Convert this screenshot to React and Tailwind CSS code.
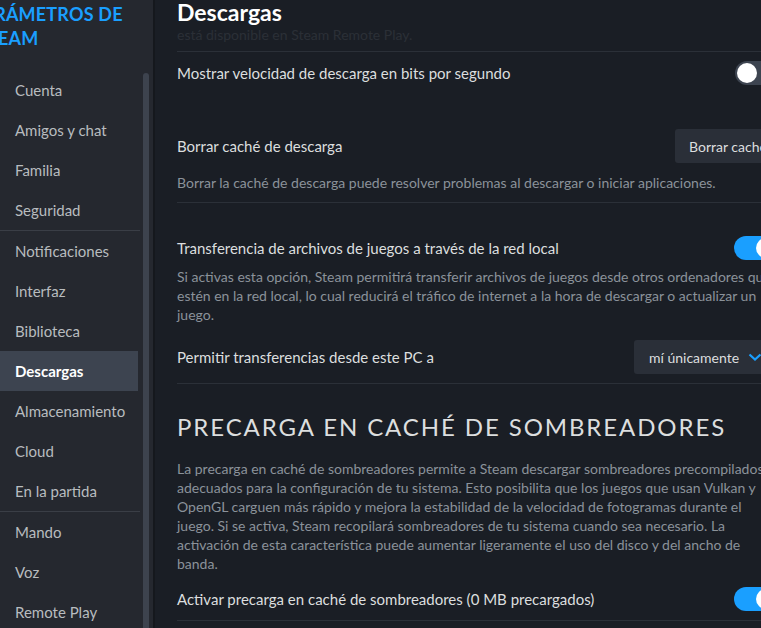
import React from "react";

const font = { fontFamily: "Lato, 'Noto Sans', sans-serif" };

function Toggle({ on }) {
  return (
    <div
      className={
        "relative h-[24px] w-[46px] shrink-0 rounded-full " +
        (on ? "bg-[#1a9fff]" : "bg-[#3d4450]")
      }
    >
      <div
        className={
          "absolute top-[2px] h-[20px] w-[20px] rounded-full bg-white " +
          (on ? "left-[22px]" : "left-[2px]")
        }
      />
    </div>
  );
}

const items = [
  ["Cuenta"],
  ["Amigos y chat"],
  ["Familia"],
  ["Seguridad", true],
  ["Notificaciones"],
  ["Interfaz"],
  ["Biblioteca"],
  ["Descargas"],
  ["Almacenamiento"],
  ["Cloud"],
  ["En la partida", true],
  ["Mando"],
  ["Voz"],
  ["Remote Play"],
];

export default function App() {
  return (
    <div
      className="flex h-[628px] w-[761px] overflow-hidden bg-[#1a1e25]"
      style={font}
    >
      {/* Sidebar */}
      <div className="flex h-full w-[153px] shrink-0 bg-[#25282f]">
        <div className="flex w-[140px] flex-col overflow-hidden">
          <div className="mt-[2px] w-[200px] text-[18px] font-bold leading-[24px] tracking-[0.2px] text-[#1a9fff]">
            <div className="ml-[-29px]">PARÁMETROS DE</div>
            <div className="ml-[-23px]">STEAM</div>
          </div>
          <div className="mt-[20px] flex flex-col">
            {items.map(([name, sep]) => (
              <React.Fragment key={name}>
                <div
                  className={
                    "flex h-[40px] shrink-0 items-center pl-[15px] text-[15px] " +
                    (name === "Descargas"
                      ? "w-[138px] bg-[#3d4450] font-bold text-white"
                      : "text-[#b8bcbf]")
                  }
                >
                  {name}
                </div>
                {sep && <div className="h-[1px] w-[140px] bg-[#3a3e46]" />}
              </React.Fragment>
            ))}
          </div>
        </div>
        <div className="flex w-[13px] flex-col items-start pl-[3px]">
          <div className="mt-[73px] w-[6px] flex-1 rounded-t-[3px] bg-[#3d434e]" />
        </div>
      </div>
      <div className="w-[2px] shrink-0 bg-[#15181d]" />

      {/* Main */}
      <div className="min-w-0 flex-1 overflow-hidden">
        <div className="ml-[22px] w-[603px]">
          {/* header */}
          <div className="relative h-[52px] border-b border-[#2b3038]">
            <div className="absolute left-0 top-[24px] text-[14px] text-[#8b929a] opacity-15">
              está disponible en Steam Remote Play.
            </div>
            <div className="relative text-[23px] font-bold leading-[25px] text-white">
              Descargas
            </div>
          </div>

          {/* row 1 */}
          <div className="flex h-[58px] items-start justify-between pt-[10px]">
            <div className="text-[15px] leading-[22px] text-[#dcdedf]">
              Mostrar velocidad de descarga en bits por segundo
            </div>
            <div className="mt-[-1px] ml-auto mr-[-1px]">
              <Toggle on={false} />
            </div>
          </div>

          {/* Borrar cache */}
          <div className="border-b border-[#2b3038] pb-[9px] pt-[19px]">
            <div className="flex items-center justify-between">
              <div className="text-[15px] leading-[22px] text-[#dcdedf]">
                Borrar caché de descarga
              </div>
              <div className="flex h-[34px] w-[105px] items-center rounded-[3px] bg-[#2a2f38] pl-[14px] text-[14px] text-[#dcdedf]">
                Borrar caché
              </div>
            </div>
            <div className="mt-[10px] text-[14px] leading-[20px] text-[#8b929a]">
              Borrar la caché de descarga puede resolver problemas al descargar
              o iniciar aplicaciones.
            </div>
          </div>

          {/* LAN transfer */}
          <div className="border-b border-[#2b3038] pb-[9px] pt-[33px]">
            <div className="flex items-center justify-between">
              <div className="text-[15px] leading-[22px] text-[#dcdedf]">
                Transferencia de archivos de juegos a través de la red local
              </div>
              <Toggle on />
            </div>
            <div className="mt-[7px] w-[600px] text-[14px] leading-[19px] text-[#8b929a]">
              Si activas esta opción, Steam permitirá transferir archivos de
              juegos desde otros ordenadores que estén en la red local, lo cual
              reducirá el tráfico de internet a la hora de descargar o
              actualizar un juego.
            </div>
            <div className="mt-[16px] flex items-center justify-between">
              <div className="text-[15px] leading-[22px] text-[#dcdedf]">
                Permitir transferencias desde este PC a
              </div>
              <div className="flex h-[34px] w-[146px] items-center justify-between rounded-[3px] bg-[#2a2f38] pl-[15px] pr-[18px] text-[14px] text-[#dcdedf]">
                <span>mí únicamente</span>
                <svg width="14" height="10" viewBox="0 0 14 10">
                  <path
                    d="M1.5 2.5 L7 7.5 L12.5 2.5"
                    fill="none"
                    stroke="#1a9fff"
                    strokeWidth="2.2"
                  />
                </svg>
              </div>
            </div>
          </div>

          {/* Shader section */}
          <div className="pt-[27px] text-[24px] font-normal leading-[32px] tracking-[1.9px] text-[#dcdedf]">
            PRECARGA EN CACHÉ DE SOMBREADORES
          </div>
          <div className="mt-[16px] w-[600px] text-[14px] leading-[19px] text-[#8b929a]">
            La precarga en caché de sombreadores permite a Steam descargar
            sombreadores precompilados adecuados para la configuración de tu
            sistema. Esto posibilita que los juegos que usan Vulkan y OpenGL
            carguen más rápido y mejora la estabilidad de la velocidad de
            fotogramas durante el juego. Si se activa, Steam recopilará
            sombreadores de tu sistema cuando sea necesario. La activación de
            esta característica puede aumentar ligeramente el uso del disco y
            del ancho de banda.
          </div>
          <div className="flex items-center justify-between border-b border-[#2b3038] pb-[9px] pt-[14px]">
            <div className="text-[15px] leading-[22px] text-[#dcdedf]">
              Activar precarga en caché de sombreadores (0 MB precargados)
            </div>
            <Toggle on />
          </div>
        </div>
      </div>
    </div>
  );
}
